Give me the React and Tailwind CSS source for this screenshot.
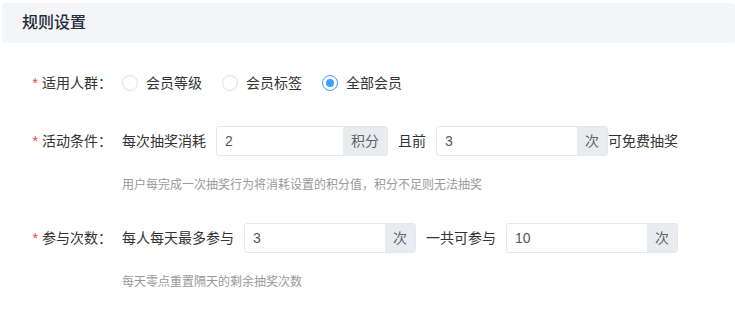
import React from "react";

const font = { fontFamily: '"Liberation Sans", "Noto Sans CJK SC", sans-serif' };

function Radio({ checked, label }) {
  return (
    <label className="flex items-center mr-5 cursor-pointer">
      {checked ? (
        <span className="w-4 h-4 rounded-full border border-[#409eff] flex items-center justify-center">
          <span className="w-2 h-2 rounded-full bg-[#409eff]" />
        </span>
      ) : (
        <span className="w-4 h-4 rounded-full border border-[#dcdfe6] bg-white" />
      )}
      <span className="ml-2 text-[14px] text-[#333]">{label}</span>
    </label>
  );
}

function InputGroup({ value, unit }) {
  return (
    <div className="flex w-[172px] h-[30px] rounded-[3px] overflow-hidden border border-[#e4e7ed]">
      <input
        className="flex-1 min-w-0 pl-2 text-[14px] text-[#555] outline-none bg-white"
        defaultValue={value}
        style={font}
      />
      <span className="flex items-center px-2 bg-[#e9ecef] text-[14px] text-[#606266]">{unit}</span>
    </div>
  );
}

function Label({ children }) {
  return (
    <div className="w-[122px] shrink-0 pr-[10px] flex justify-end items-center text-[14px] text-[#333]">
      <span className="text-[#f04134] mr-1">*</span>
      {children}
    </div>
  );
}

export default function App() {
  return (
    <div className="w-[735px] h-[310px] bg-white" style={font}>
      <div className="ml-[2px] mt-[3px] h-[40px] bg-[#f4f5f7] rounded-[3px] flex items-center pl-[20px]">
        <span className="text-[16px] font-medium text-[#1f2d3d]">规则设置</span>
      </div>

      <div className="mt-[25px] flex items-center h-[30px]">
        <Label>适用人群：</Label>
        <Radio label="会员等级" />
        <Radio label="会员标签" />
        <Radio checked label="全部会员" />
      </div>

      <div className="mt-[28px] flex items-center h-[30px] text-[14px] text-[#333]">
        <Label>活动条件：</Label>
        <span className="mr-[10px]">每次抽奖消耗</span>
        <InputGroup value="2" unit="积分" />
        <span className="mx-[10px]">且前</span>
        <InputGroup value="3" unit="次" />
        <span>可免费抽奖</span>
      </div>
      <div className="pl-[122px] mt-[19px] h-[20px] leading-[20px] text-[12px] text-[#999]">
        用户每完成一次抽奖行为将消耗设置的积分值，积分不足则无法抽奖
      </div>

      <div className="mt-[28px] flex items-center h-[30px] text-[14px] text-[#333]">
        <Label>参与次数：</Label>
        <span className="mr-[10px]">每人每天最多参与</span>
        <InputGroup value="3" unit="次" />
        <span className="mx-[10px]">一共可参与</span>
        <InputGroup value="10" unit="次" />
      </div>
      <div className="pl-[122px] mt-[19px] h-[20px] leading-[20px] text-[12px] text-[#999]">
        每天零点重置隔天的剩余抽奖次数
      </div>
    </div>
  );
}
